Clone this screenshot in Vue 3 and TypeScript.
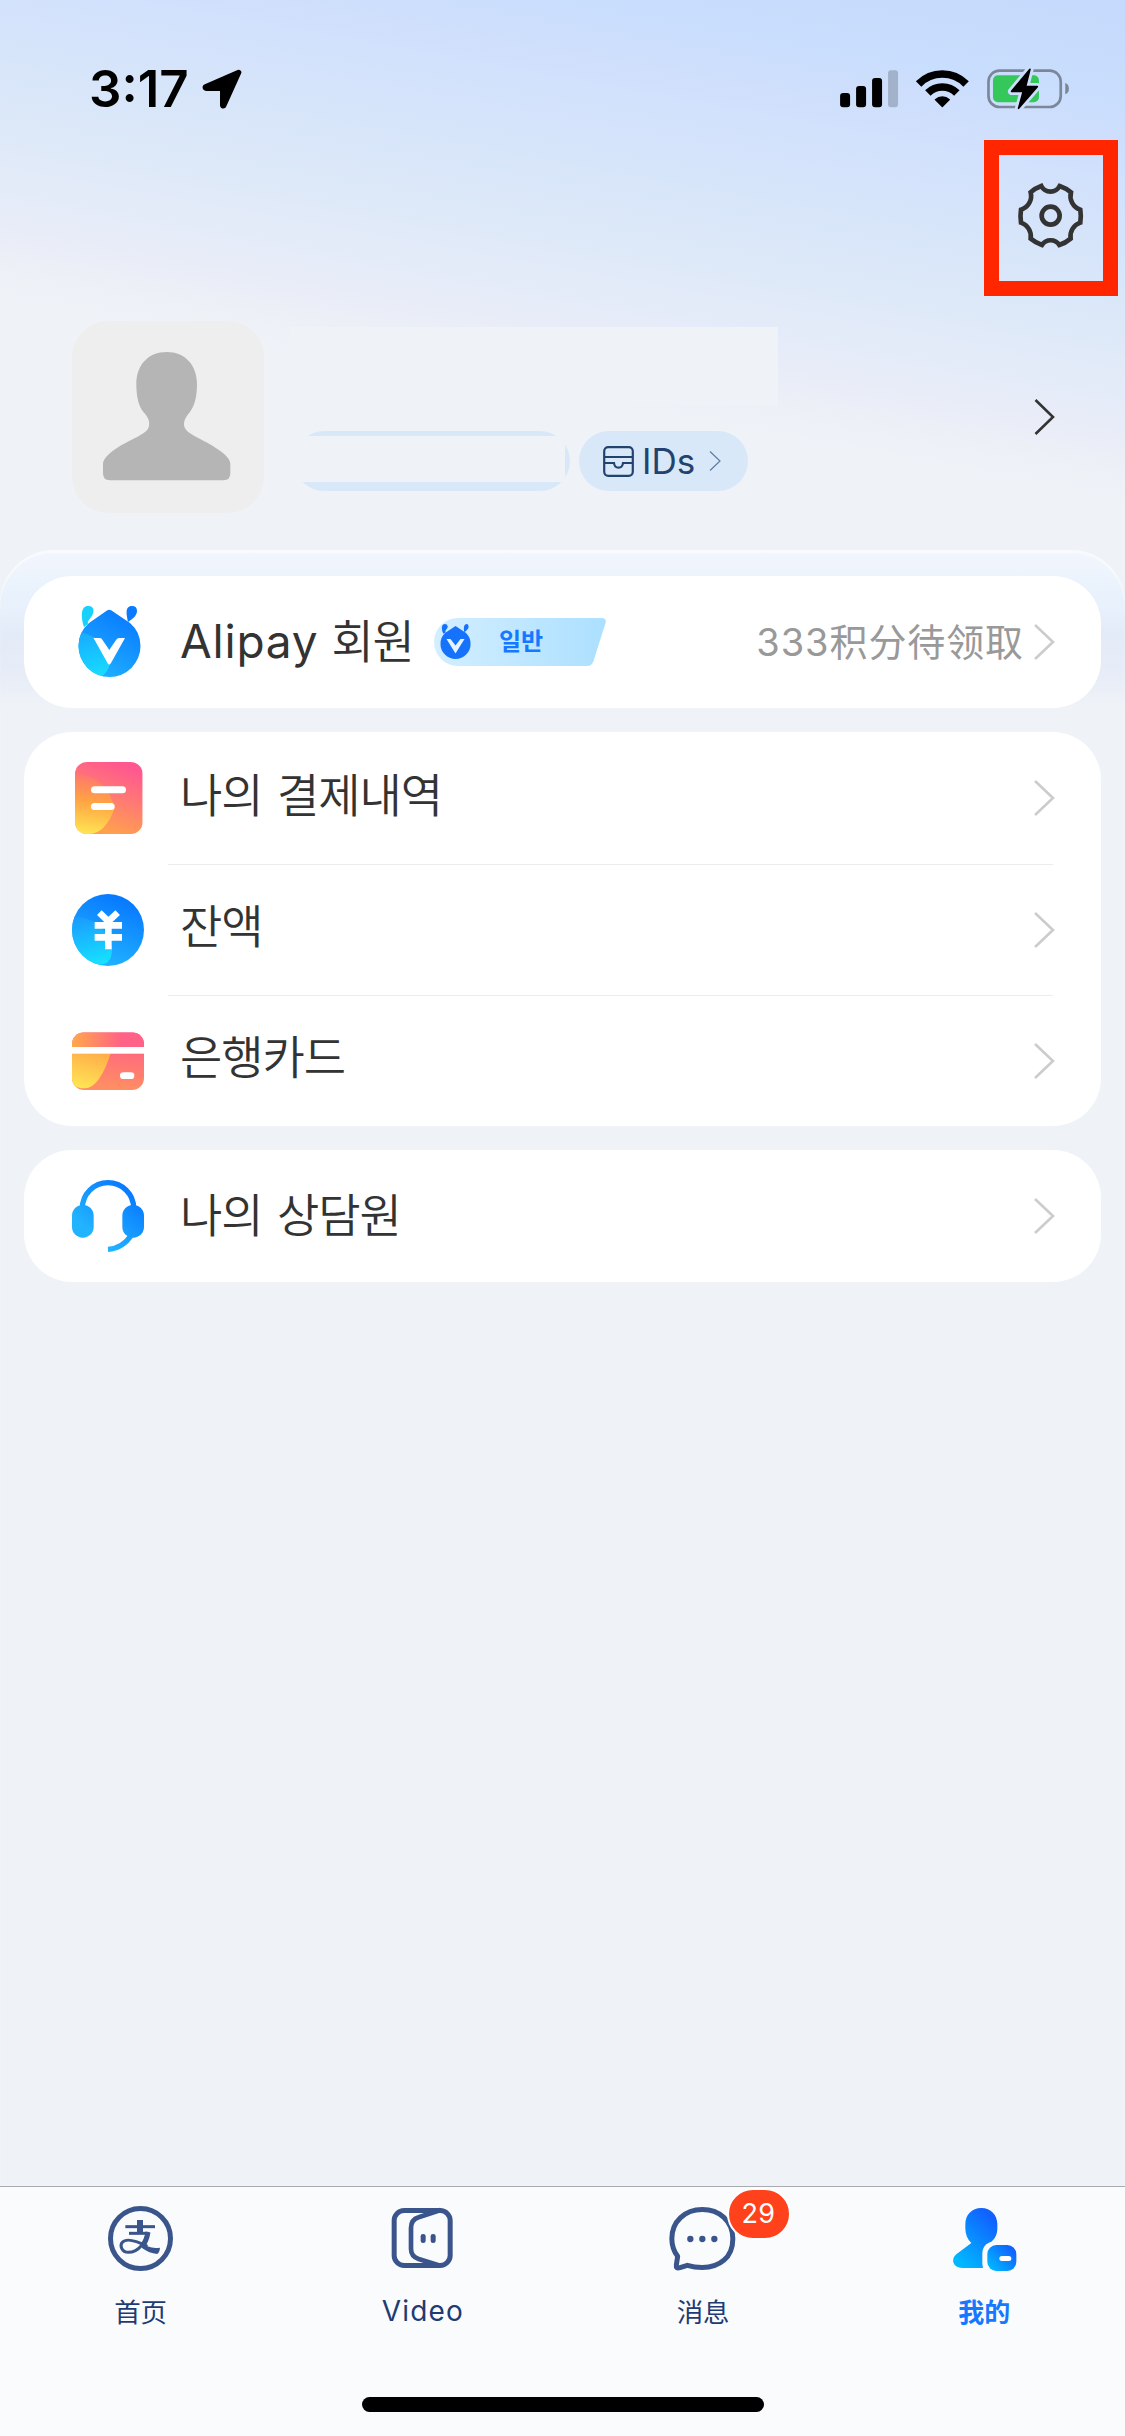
<script setup lang="ts">
interface Row {
  id: string
  label: string
}

const wallet: Row[] = [
  { id: 'bill', label: '나의 결제내역' },
  { id: 'balance', label: '잔액' },
  { id: 'card', label: '은행카드' },
]
</script>

<template>
  <div class="page">
    <header class="status">
      <div class="clock">
        <span class="time">3:17</span>
        <svg class="loc" viewBox="425 88 120 120"><path d="M535 98 L435 142 Q434 146 438 146 H487 V197 Q488 200 490 198 Z" stroke="#000" stroke-width="16" stroke-linejoin="round" /></svg>
      </div>
      <svg class="sys" viewBox="60 50 690 130">
        <rect x="60" y="128" width="30" height="43" rx="9" />
        <rect x="108" y="107" width="30" height="64" rx="9" />
        <rect x="156" y="83" width="30" height="88" rx="9" />
        <rect x="204" y="60" width="30" height="111" rx="9" fill="#a3b2cb" />
        <g fill="none" stroke="#000">
          <path d="M295.7 101 A100 100 0 0 1 438.3 101" stroke-width="23" />
          <path d="M323.5 128 A61.5 61.5 0 0 1 410.5 128" stroke-width="23" />
        </g>
        <path d="M367 169 L346 148 A31 31 0 0 1 388 148 Z" stroke="#000" stroke-width="4" stroke-linejoin="round" />
        <rect x="505.500" y="61" width="217" height="109" rx="33" fill="none" stroke="#7b8798" stroke-width="8" />
        <rect x="519" y="75" width="138" height="81" rx="15" fill="#34c759" />
        <path d="M736 98 Q747 102 747 115 T736 132 Z" fill="#7b8798" />
        <path d="M630 57 L575 123 H610 L596 174 L652 109 H617 Z" fill="#000" stroke="#cbdefc" stroke-width="22" stroke-linejoin="round" />
        <path d="M630 57 L575 123 H610 L596 174 L652 109 H617 Z" fill="#000" stroke="#000" stroke-width="5" stroke-linejoin="round" />
      </svg>
    </header>

    <div class="tools">
      <button class="settings" aria-label="settings">
        <svg viewBox="130 148 220 220" fill="none" stroke="#333" stroke-width="14">
          <path d="M212 169 A31 31 0 0 0 267 169 Q285 175 301 188 A43 43 0 0 0 329 240 Q332 259 329 279 A43 43 0 0 0 300 327 Q285 340 266 346 A31 31 0 0 0 214 346 Q196 340 180 327 A43 43 0 0 0 151 279 Q148 259 151 240 A43 43 0 0 0 180 188 Q195 175 212 169 Z" />
          <circle cx="240" cy="258" r="27" />
        </svg>
      </button>
    </div>

    <section class="profile">
      <div class="avatar">
        <svg viewBox="36 33 576 576"><path fill="#b5b5b5" d="M320 126 C375 126 411 165 411 222 C411 262 403 290 388 308 C372 327 368 342 376 356 C388 376 440 392 480 422 C500 436 511 450 511 462 V490 Q511 511 490 511 H150 Q129 511 129 490 V462 C129 450 142 434 165 418 C205 390 252 376 264 356 C272 342 268 325 252 308 C236 290 229 262 229 222 C229 165 265 126 320 126 Z" /></svg>
      </div>
      <div class="who">
        <div class="name-mask"></div>
        <div class="pills">
          <div class="pill account"><span class="account-mask"></span></div>
          <div class="pill ids">
            <svg class="ids-icon" viewBox="0 0 31 31" fill="none" stroke="#23436f" stroke-width="2.200">
              <rect x="1.200" y="1.200" width="28.600" height="28.600" rx="4" />
              <path d="M1 11 H30 M1 17 H11 Q11.500 21.700 15.500 21.700 T20 17 H30" />
            </svg>
            <span class="ids-text">IDs</span>
            <svg class="ids-arrow" viewBox="0 0 12 20" fill="none" stroke="#5e7da3" stroke-width="1.200"><path d="M1 .5 L11 10 L1 19.500" /></svg>
          </div>
        </div>
      </div>
      <svg class="arrow dark" viewBox="0 0 21 36"><path d="M1.500 1 L19 18 L1.500 35" /></svg>
    </section>

    <main class="panel">
      <section class="card">
        <div class="row">
          <span class="icon">
            <svg viewBox="72 606 72 72">
              <defs>
                <linearGradient id="antBlue" x1=".75" y1=".1" x2=".25" y2="1"><stop offset="0" stop-color="#0a7bff" /><stop offset="1" stop-color="#20b4ff" /></linearGradient>
                <linearGradient id="antCyan" x1=".3" y1="0" x2=".5" y2="1"><stop offset="0" stop-color="#18a8ff" /><stop offset="1" stop-color="#17dcff" /></linearGradient>
                <clipPath id="antClip"><path d="M107 610.500 Q109.300 609 111.500 610.500 L130 623 Q140.500 632 140.500 646 A31 31 0 0 1 78.500 646 Q78.500 632 89 623 Z" /></clipPath>
              </defs>
              <path fill="#17d0fb" d="M88 606 C81 606 80.500 616 84 627 L88 624 C86.500 620 93.500 617 93.500 611 Q93.500 606 88 606 Z" />
              <path fill="#0a7bff" d="M132 606 C124 606 127 616 128 622 C133 619 137 615 137 611 Q137 606 132 606 Z" />
              <g clip-path="url(#antClip)">
                <rect x="72" y="606" width="72" height="72" fill="url(#antBlue)" />
                <path d="M72 630 Q118 640 109 667 Q105 676 98 678 H72 Z" fill="url(#antCyan)" />
              </g>
              <path fill="#fff" d="M93.500 638 H100 Q101.500 638 102.500 640 L109.300 650 L116 640 Q117.500 638 119 638 H125 L111 663 Q109 666 107.500 663 Z" />
            </svg>
          </span>
          <span class="label member"><span class="latin">Alipay</span> <span class="ko">회원</span></span>
          <span class="level">
            <svg class="level-bg" viewBox="0 0 172 48">
              <defs><linearGradient id="lvl"><stop offset="0" stop-color="#d3eeff" /><stop offset="1" stop-color="#ace0ff" /></linearGradient></defs>
              <path fill="url(#lvl)" d="M24 0 H167 Q173 0 171.500 5 L159.500 43 Q158 48 153 48 H24 A24 24 0 0 1 24 0 Z" />
              <g fill="#1672fa" transform="translate(6.500 6) scale(.485)">
                <path d="M9 0 C2 0 1 10 6 20 L11 17 C8 13 15 10 15 5 Q14 0 9 0 Z M53 0 C47 2 48 10 49 17 C54 13 58 10 58 5 Q58 0 53 0 Z" />
                <path d="M31 4 L52 18 Q62 27 62 41 A31 31 0 0 1 0 41 Q0 27 10 18 Z" />
              </g>
              <path fill="#e1f4ff" d="M12.500 21 H16.500 L21.500 27.500 L26.500 21 H30.500 L21.500 35.500 Z" />
            </svg>
            <span class="level-text">일반</span>
          </span>
          <span class="points">333<span class="zh">积分待领取</span></span>
          <svg class="arrow" viewBox="0 0 21 36"><path d="M1 1 L19 18 L1 35" /></svg>
        </div>
      </section>

      <section class="card">
        <div v-for="row in wallet" :key="row.id" class="row lined">
          <span class="icon">
            <svg v-if="row.id === 'bill'" viewBox="96 96 216 216">
              <defs>
                <linearGradient id="bill" x1=".9" y1=".1" x2=".6" y2="1"><stop offset="0" stop-color="#ff5790" /><stop offset=".5" stop-color="#ff7b72" /><stop offset="1" stop-color="#ffa04f" /></linearGradient>
                <linearGradient id="billY" x1=".4" y1="0" x2=".3" y2="1"><stop offset="0" stop-color="#ff7373" /><stop offset=".45" stop-color="#ffa244" /><stop offset="1" stop-color="#ffe552" /></linearGradient>
                <clipPath id="billClip"><rect x="105" y="96" width="203" height="216" rx="36" /></clipPath>
              </defs>
              <g clip-path="url(#billClip)">
                <rect x="105" y="96" width="203" height="216" fill="url(#bill)" />
                <path d="M105 130 Q200 140 224 235 Q195 312 148 312 H105 Z" fill="url(#billY)" />
              </g>
              <rect x="153" y="169" width="105" height="21" rx="10.500" fill="#fff" />
              <rect x="153" y="219" width="71" height="21" rx="10.500" fill="#fff" />
            </svg>
            <svg v-else-if="row.id === 'balance'" viewBox="96 492 216 216">
              <defs>
                <linearGradient id="bal" x1=".75" y1=".1" x2=".4" y2="1"><stop offset="0" stop-color="#087aff" /><stop offset="1" stop-color="#22b5ff" /></linearGradient>
                <linearGradient id="balC" x1=".3" y1="0" x2=".5" y2="1"><stop offset="0" stop-color="#1a9cff" /><stop offset="1" stop-color="#16e2ff" /></linearGradient>
                <clipPath id="balClip"><circle cx="204" cy="600" r="108" /></clipPath>
              </defs>
              <g clip-path="url(#balClip)">
                <rect x="96" y="492" width="216" height="216" fill="url(#bal)" />
                <path d="M96 560 Q190 560 216 650 Q218 695 190 702 L150 708 H96 Z" fill="url(#balC)" />
              </g>
              <g stroke="#fff" stroke-width="20" stroke-linejoin="round" fill="none">
                <path d="M178 548 L205 574 L233 548 M205 573 V658" />
                <path d="M164 586 H246 M164 622 H246" />
              </g>
            </svg>
            <svg v-else viewBox="96 884 216 216">
              <defs>
                <linearGradient id="bank" x1=".85" y1="0" x2=".7" y2="1"><stop offset="0" stop-color="#ff588c" /><stop offset="1" stop-color="#ff8f62" /></linearGradient>
                <linearGradient id="bankTop"><stop offset="0" stop-color="#ffa94a" /><stop offset=".7" stop-color="#ff6187" /></linearGradient>
                <linearGradient id="bankY" x1=".6" y1="0" x2=".35" y2="1"><stop offset="0" stop-color="#ffab48" /><stop offset="1" stop-color="#ffe454" /></linearGradient>
                <clipPath id="bankClip"><rect x="96" y="906" width="216" height="173" rx="36" /></clipPath>
              </defs>
              <g clip-path="url(#bankClip)">
                <rect x="96" y="906" width="216" height="173" fill="url(#bank)" />
                <rect x="96" y="906" width="216" height="45" fill="url(#bankTop)" />
                <path d="M96 960 H215 Q180 1074 134 1074 Q110 1074 96 1060 Z" fill="url(#bankY)" />
                <rect x="96" y="950" width="216" height="20" fill="#fff" />
              </g>
              <rect x="240" y="1026" width="43" height="20" rx="10" fill="#fff" />
            </svg>
          </span>
          <span class="label ko">{{ row.label }}</span>
          <svg class="arrow" viewBox="0 0 21 36"><path d="M1 1 L19 18 L1 35" /></svg>
        </div>
      </section>

      <section class="card">
        <div class="row">
          <span class="icon">
            <svg viewBox="96 150 216 216">
              <defs><linearGradient id="head" gradientUnits="userSpaceOnUse" x1="280" y1="190" x2="170" y2="320"><stop offset="0" stop-color="#087aff" /><stop offset="1" stop-color="#22b3ff" /></linearGradient></defs>
              <g fill="none" stroke="url(#head)" stroke-width="16"><path d="M127 235 A77 77 0 0 1 281 235" /><path d="M204 358 Q249 355 275 314" /></g>
              <g fill="url(#head)"><rect x="96" y="225" width="65" height="98" rx="32" /><rect x="247" y="225" width="65" height="98" rx="32" /></g>
            </svg>
          </span>
          <span class="label ko">나의 상담원</span>
          <svg class="arrow" viewBox="0 0 21 36"><path d="M1 1 L19 18 L1 35" /></svg>
        </div>
      </section>
    </main>

    <footer class="dock">
      <nav class="tabs">
        <div class="tab">
          <svg viewBox="135 99 213 213" fill="none" stroke="#3a558b">
            <circle cx="241.500" cy="205.500" r="90" stroke-width="15" />
            <path d="M240 150 V190" stroke-width="18" />
            <path d="M196 170 H285" stroke-width="9" />
            <path d="M207 190 H266" stroke-width="9" />
            <path d="M264 187 C258 212 238 247 205 247 C184 247 179 225 187 217 C200 202 230 213 262 229" stroke-width="9" />
            <path d="M264 186 Q260 212 247 228" stroke-width="15" />
            <path d="M244 224 L262 229 Q282 237 300 233 Q299 248 291 252 Q268 250 246 234 Z" fill="#3a558b" stroke="none" />
          </svg>
          <span class="tab-text zh">首页</span>
        </div>
        <div class="tab">
          <svg viewBox="979 99 213 213" fill="none" stroke="#3a558b" stroke-width="15">
            <rect x="1003.500" y="121.500" width="168" height="165" rx="30" />
            <path d="M1143 120 L1077 142 Q1054 149 1054 174 V236 Q1054 259 1077 267 L1137 286" stroke-width="14" />
            <rect x="1083" y="192" width="15" height="27" rx="7" fill="#3a558b" stroke="none" />
            <rect x="1113" y="192" width="15" height="27" rx="7" fill="#3a558b" stroke="none" />
          </svg>
          <span class="tab-text video">Video</span>
        </div>
        <div class="tab">
          <svg viewBox="83 99 213 213" fill="none" stroke="#3a558b" stroke-width="15" stroke-linejoin="round">
            <path d="M186 118.500 C236 118.500 277.500 152 277.500 206 C277.500 263 237 292.500 186 292.500 C170 292.500 157 291 141 286 L119 293 Q106 297 108 285 L112 259 Q94.500 236 94.500 206 C94.500 154 134 118.500 186 118.500 Z" />
            <g fill="#3a558b" stroke="none"><circle cx="150" cy="207" r="9.500" /><circle cx="186" cy="207" r="9.500" /><circle cx="222" cy="207" r="9.500" /></g>
          </svg>
          <span class="tab-text zh">消息</span>
          <span class="count">29</span>
        </div>
        <div class="tab active">
          <svg viewBox="926 99 213 213">
            <defs>
              <linearGradient id="me" x1=".8" y1=".1" x2=".2" y2=".95"><stop offset="0" stop-color="#1161ff" /><stop offset="1" stop-color="#00b8ff" /></linearGradient>
              <linearGradient id="meC" x1=".9" y1=".2" x2=".1" y2=".9"><stop offset="0" stop-color="#1161ff" /><stop offset="1" stop-color="#00b8ff" /></linearGradient>
            </defs>
            <path fill="url(#me)" d="M1023 114 C1052 114 1071 135 1071 163 V175 C1071 193 1064 207 1053 215 C1036 220 1026 231 1026 253 V282 L1028 294 H966 C939 294 930 268 948 253 L993 219 C981 208 975 193 975 175 V163 C975 135 994 114 1023 114 Z" />
            <rect x="1041" y="225" width="87" height="78" rx="27" fill="url(#meC)" />
            <rect x="1077" y="258" width="36" height="15" rx="7.500" fill="#fff" />
          </svg>
          <span class="tab-text zh">我的</span>
        </div>
      </nav>
      <div class="home"></div>
    </footer>
  </div>
</template>

<style>
body {
  margin: 0;
}
</style>

<style scoped>
.page {
  box-sizing: border-box;
  width: 1125px;
  height: 2436px;
  display: flex;
  flex-direction: column;
  overflow: hidden;
  background: #eff3f8 linear-gradient(190.3deg, #c5dafc 0%, #c9ddfd 13%, #d2e1fc 24%, #d7e5fa 34%, #dde9f8 44%, #e3ebf8 50%, #e8ecf8 56%, #edf0f6 62%, #eff3f8 66%) 0 0 / 1125px 560px no-repeat;
  font-family: Inter, "Noto Sans CJK SC", sans-serif;
  color: #333;
}
svg {
  display: block;
  flex: none;
}
.status {
  height: 140px;
  box-sizing: border-box;
  padding: 65px 55px 0 89px;
  display: flex;
  justify-content: space-between;
  align-items: flex-start;
}
.clock {
  display: flex;
  height: 48px;
  align-items: center;
}
.time {
  width: 113px;
  font-size: 51px;
  font-weight: 600;
  letter-spacing: 0;
  line-height: 48px;
  color: #000;
  white-space: nowrap;
}
.loc {
  width: 40px;
  height: 40px;
}
.sys {
  width: 230px;
  height: 43.300px;
  margin-top: 1.700px;
}
.tools {
  display: flex;
  justify-content: flex-end;
  padding-right: 7px;
}
.settings {
  box-sizing: border-box;
  width: 134px;
  height: 156px;
  padding: 0 1px 4px 0;
  border: 15px solid #ff2600;
  background: none;
  display: flex;
  align-items: center;
  justify-content: center;
}
.settings svg {
  width: 73.300px;
  height: 73.300px;
}
.profile {
  margin-top: 25px;
  height: 192px;
  padding: 0 70px 0 72px;
  display: flex;
}
.avatar {
  width: 192px;
  height: 192px;
  border-radius: 36px;
  background: #eee;
}
.who {
  flex: 1;
  padding: 6px 0 0 25px;
}
.name-mask {
  width: 489px;
  height: 79px;
  background: #eff3f8;
}
.pills {
  display: flex;
  gap: 9px;
  margin: 25px 0 0 5px;
}
.pill {
  box-sizing: border-box;
  height: 60px;
  border-radius: 30px;
  background: #d9e8f8;
}
.account {
  width: 276px;
  padding-top: 5px;
}
.account-mask {
  display: block;
  width: 276px;
  height: 46px;
  margin-left: -5px;
  background: #eff3f8;
}
.ids {
  width: 169px;
  padding-left: 24px;
  display: flex;
  align-items: center;
}
.ids-icon {
  width: 31px;
  height: 31px;
  margin-top: 1px;
}
.ids-text {
  width: 67px;
  margin-left: 8px;
  font-size: 35px;
  line-height: 60px;
  color: #23436f;
}
.ids-arrow {
  width: 12px;
  height: 20px;
}
.arrow {
  width: 21px;
  height: 36px;
  fill: none;
  stroke: #ccc;
  stroke-width: 2.600;
}
.arrow.dark {
  stroke: #333;
  margin-top: 78px;
}
.panel {
  margin-top: 37px;
  box-sizing: border-box;
  flex: 1;
  padding: 26px 24px 0;
  display: flex;
  flex-direction: column;
  gap: 24px;
  border-radius: 54px 54px 0 0;
  background: linear-gradient(#f1f6fe 0, #f0f5fd 16px, #ebf3fc 30px, #e8f1fc 56px, #e3ebf8 84px, #e8edf7 130px, #eff3f8 156px);
  box-shadow: inset 0 3px 1px #f8fafc;
}
.card {
  background: #fff;
  border-radius: 48px;
}
.row {
  box-sizing: border-box;
  height: 132px;
  padding: 0 46px 0 48px;
  display: flex;
  align-items: center;
}
.lined {
  height: 131px;
  position: relative;
}
.lined:first-child {
  height: 132px;
}
.lined + .lined::before {
  content: "";
  position: absolute;
  left: 144px;
  right: 48px;
  top: 0;
  height: 1px;
  background: #ececec;
}
.icon,
.icon svg {
  width: 72px;
  height: 72px;
}
.label {
  margin-left: 36px;
  flex: 1;
  font-size: 46px;
  line-height: 60px;
  padding-bottom: 8px;
  white-space: nowrap;
}
.ko {
  font-family: "Noto Sans CJK KR", sans-serif;
  font-weight: 350;
  letter-spacing: -1.100px;
  word-spacing: 5.500px;
}
.lined .label {
  padding-bottom: 13px;
}
.label.member {
  flex: none;
  width: 254px;
  padding-bottom: 6px;
}
.latin {
  letter-spacing: 0.800px;
}
.level {
  position: relative;
  width: 172px;
  height: 48px;
}
.level-bg {
  width: 172px;
  height: 48px;
}
.level-text {
  position: absolute;
  left: 65px;
  top: 0;
  font: 700 24px/43px "Noto Sans CJK KR", sans-serif;
  color: #1677ff;
}
.points {
  flex: 1;
  text-align: right;
  font-size: 38px;
  line-height: 60px;
  padding-bottom: 2px;
  letter-spacing: 0.900px;
  color: #999;
  margin-right: 10px;
}
.zh {
  font-family: "Noto Sans CJK SC", sans-serif;
}
.dock {
  box-sizing: border-box;
  height: 250px;
  border-top: 1px solid #a9abae;
  background: #fafbfd;
}
.tabs {
  display: flex;
  height: 210px;
}
.tab {
  position: relative;
  flex: 1;
  display: flex;
  flex-direction: column;
  align-items: center;
  padding-top: 16px;
}
.tab svg {
  width: 71px;
  height: 71px;
}
.tab-text {
  margin-top: 17px;
  font-size: 26.500px;
  line-height: 40px;
  color: #1f3b73;
}
.video {
  font-size: 28px;
  letter-spacing: 1.200px;
  padding-left: 2px;
}
.active .tab-text {
  color: #1677ff;
  font-weight: 700;
  font-size: 26px;
}
.count {
  position: absolute;
  left: 164px;
  top: 1px;
  width: 60px;
  height: 48px;
  border: 2px solid #fff;
  border-radius: 27px;
  background: #ff411c;
  color: #fff;
  font-size: 27px;
  line-height: 48px;
  letter-spacing: 0.500px;
  text-align: center;
}
.home {
  width: 402px;
  height: 15px;
  margin-left: 362px;
  border-radius: 8px;
  background: #000;
}
</style>
